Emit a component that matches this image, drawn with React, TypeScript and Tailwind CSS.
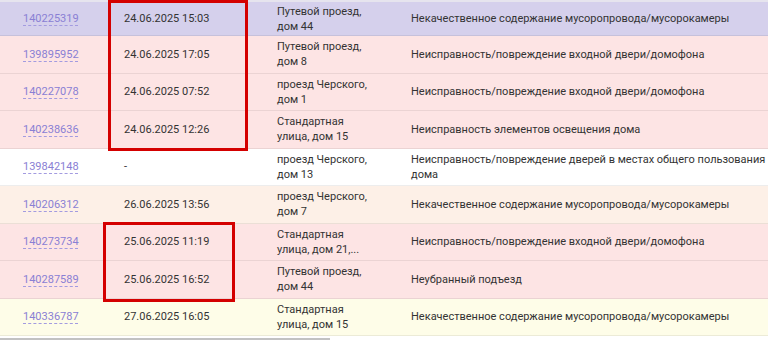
import React from "react";

type Row = {
  id: string;
  date: string;
  addr: [string, string];
  desc: React.ReactNode;
  bg: string;
};

const rows: Row[] = [
  { id: "140225319", date: "24.06.2025 15:03", addr: ["Путевой проезд,", "дом 44"], desc: "Некачественное содержание мусоропровода/мусорокамеры", bg: "bg-[#d5d0ec]" },
  { id: "139895952", date: "24.06.2025 17:05", addr: ["Путевой проезд,", "дом 8"], desc: "Неисправность/повреждение входной двери/домофона", bg: "bg-[#fde4e4]" },
  { id: "140227078", date: "24.06.2025 07:52", addr: ["проезд Черского,", "дом 1"], desc: "Неисправность/повреждение входной двери/домофона", bg: "bg-[#fde4e4]" },
  { id: "140238636", date: "24.06.2025 12:26", addr: ["Стандартная", "улица, дом 15"], desc: "Неисправность элементов освещения дома", bg: "bg-[#fde4e4]" },
  { id: "139842148", date: "-", addr: ["проезд Черского,", "дом 13"], desc: (<>Неисправность/повреждение дверей в местах общего пользования<br />дома</>), bg: "bg-white" },
  { id: "140206312", date: "26.06.2025 13:56", addr: ["проезд Черского,", "дом 7"], desc: "Некачественное содержание мусоропровода/мусорокамеры", bg: "bg-[#fdf0e7]" },
  { id: "140273734", date: "25.06.2025 11:19", addr: ["Стандартная", "улица, дом 21,..."], desc: "Неисправность/повреждение входной двери/домофона", bg: "bg-[#fde4e4]" },
  { id: "140287589", date: "25.06.2025 16:52", addr: ["Путевой проезд,", "дом 44"], desc: "Неубранный подъезд", bg: "bg-[#fde4e4]" },
  { id: "140336787", date: "27.06.2025 16:05", addr: ["Стандартная", "улица, дом 15"], desc: "Некачественное содержание мусоропровода/мусорокамеры", bg: "bg-[#fefde8]" },
];

export default function App() {
  return (
    <div className="relative w-[768px] h-[344px] overflow-hidden bg-white font-['Roboto','Liberation_Sans',sans-serif] text-[11px] leading-[15px] text-[#333333]">
      <div className="h-[2px] bg-[#e6e4ee]" />
      {rows.map((r, i) => (
        <div
          key={r.id}
          className={`flex items-center border-b border-[#00000012] ${r.bg} ${i === 0 ? "h-[34px]" : "h-[37.5px]"}`}
        >
          <div className="w-[112px] shrink-0 pl-[23px]">
            <span className="text-[#8a80d4] underline decoration-dashed decoration-[#a39be0] underline-offset-[3px]">{r.id}</span>
          </div>
          <div className="w-[153px] shrink-0 pl-[12px]">{r.date}</div>
          <div className="w-[134px] shrink-0 pl-[12px] whitespace-nowrap">
            <div>{r.addr[0]}</div>
            <div>{r.addr[1]}</div>
          </div>
          <div className="flex-1 min-w-0 pl-[12px] whitespace-nowrap">{r.desc}</div>
        </div>
      ))}
      <div className="mt-[2px] h-[2px] w-[330px] bg-[#c2c2c2]" />

      <div className="absolute left-[108px] top-0 w-[140px] h-[151px] border-[3px] border-[#d40000]" />
      <div className="absolute left-[103px] top-[222px] w-[132px] h-[80px] border-[3px] border-[#d40000]" />
    </div>
  );
}
